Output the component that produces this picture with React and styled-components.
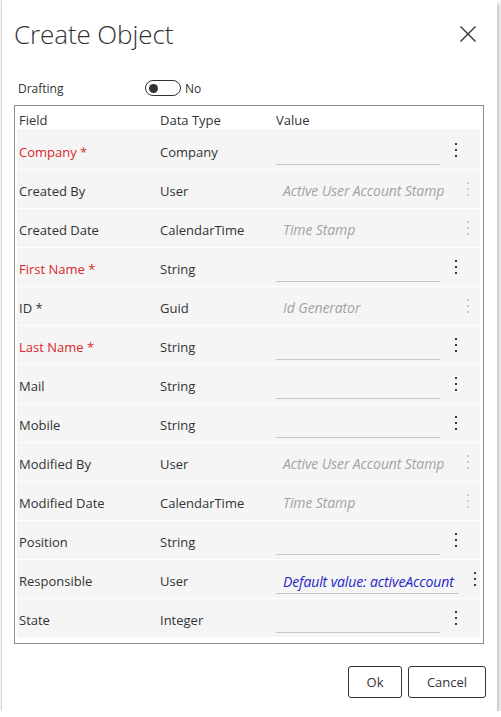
import React from 'react'
import styled, { createGlobalStyle } from 'styled-components'

const GlobalStyle = createGlobalStyle`
	html, body {
		margin: 0;
		padding: 0;
		background: #ffffff;
	}
	body {
		font-family: 'Open Sans', 'Liberation Sans', sans-serif;
		color: #333;
	}
`

const rows = [
	{ field: 'Company *', type: 'Company', required: true, kind: 'input' },
	{ field: 'Created By', type: 'User', kind: 'readonly', text: 'Active User Account Stamp' },
	{ field: 'Created Date', type: 'CalendarTime', kind: 'readonly', text: 'Time Stamp' },
	{ field: 'First Name *', type: 'String', required: true, kind: 'input' },
	{ field: 'ID *', type: 'Guid', kind: 'readonly', text: 'Id Generator' },
	{ field: 'Last Name *', type: 'String', required: true, kind: 'input' },
	{ field: 'Mail', type: 'String', kind: 'input' },
	{ field: 'Mobile', type: 'String', kind: 'input' },
	{ field: 'Modified By', type: 'User', kind: 'readonly', text: 'Active User Account Stamp' },
	{ field: 'Modified Date', type: 'CalendarTime', kind: 'readonly', text: 'Time Stamp' },
	{ field: 'Position', type: 'String', kind: 'input' },
	{ field: 'Responsible', type: 'User', kind: 'default', text: 'Default value: activeAccount' },
	{ field: 'State', type: 'Integer', kind: 'input' }
]

function MoreIcon({ faded }) {
	const c = faded ? '#c9c9c9' : '#3a3a3a'
	return (
		<svg width='4' height='16' viewBox='0 0 4 16'>
			<rect x='1' y='1' width='2' height='2' fill={c} />
			<rect x='1' y='7' width='2' height='2' fill={c} />
			<rect x='1' y='13' width='2' height='2' fill={c} />
		</svg>
	)
}

function CloseIcon() {
	return (
		<svg width='18' height='18' viewBox='0 0 18 18'>
			<path d='M1.5 1.5 L16.5 16.5 M16.5 1.5 L1.5 16.5' stroke='#333' strokeWidth='1.4' fill='none' />
		</svg>
	)
}

function App() {
	return (
		<>
			<GlobalStyle />
			<Dialog>
				<Header>
					<Title>Create Object</Title>
					<CloseButton aria-label='Close'>
						<CloseIcon />
					</CloseButton>
				</Header>

				<DraftRow>
					<DraftLabel>Drafting</DraftLabel>
					<Toggle>
						<Knob />
					</Toggle>
					<ToggleText>No</ToggleText>
				</DraftRow>

				<TableBox>
					<HeadRow>
						<HeadCell>Field</HeadCell>
						<HeadCell>Data Type</HeadCell>
						<HeadCell>Value</HeadCell>
					</HeadRow>
					{rows.map((r) => (
						<Row key={r.field}>
							<FieldCell required={r.required}>{r.field}</FieldCell>
							<TypeCell>{r.type}</TypeCell>
							<ValueCell>
								{r.kind === 'input' && (
									<>
										<ValueInput width={164} />
										<MenuButton>
											<MoreIcon />
										</MenuButton>
									</>
								)}
								{r.kind === 'readonly' && (
									<>
										<ReadOnlyText>{r.text}</ReadOnlyText>
										<MenuButton>
											<MoreIcon faded />
										</MenuButton>
									</>
								)}
								{r.kind === 'default' && (
									<>
										<ValueInput width={183}>
											<DefaultText>{r.text}</DefaultText>
										</ValueInput>
										<MenuButton>
											<MoreIcon />
										</MenuButton>
									</>
								)}
							</ValueCell>
						</Row>
					))}
				</TableBox>

				<Footer>
					<ActionButton width={54}>Ok</ActionButton>
					<ActionButton width={78}>Cancel</ActionButton>
				</Footer>
			</Dialog>
		</>
	)
}

export default App

const Dialog = styled.div`
	box-sizing: border-box;
	width: 496px;
	height: 711px;
	margin-left: 1px;
	background: #fff;
	border-left: 1px solid #d8d8d8;
	box-shadow: 2px 3px 5px rgba(0, 0, 0, 0.28);
	display: flex;
	flex-direction: column;
`

const Header = styled.div`
	display: flex;
	align-items: center;
	justify-content: space-between;
	padding: 14px 20px 0 12px;
	height: 40px;
`

const Title = styled.h1`
	margin: 0;
	font-size: 26px;
	font-weight: 300;
	color: #333;
	letter-spacing: -0.1px;
`

const CloseButton = styled.button`
	border: 0;
	background: none;
	padding: 0;
	display: flex;
	cursor: pointer;
`

const DraftRow = styled.div`
	display: flex;
	align-items: center;
	padding: 0 0 0 16px;
	margin-top: 25px;
	height: 18px;
`

const DraftLabel = styled.span`
	font-size: 12px;
	width: 127px;
	color: #333;
`

const Toggle = styled.div`
	box-sizing: border-box;
	width: 36px;
	height: 16px;
	border: 1px solid #333;
	border-radius: 8px;
	display: flex;
	align-items: center;
	padding-left: 3px;
`

const Knob = styled.div`
	width: 9px;
	height: 9px;
	border-radius: 50%;
	background: #333;
`

const ToggleText = styled.span`
	font-size: 12px;
	margin-left: 4px;
`

const TableBox = styled.div`
	box-sizing: border-box;
	margin: 8px 13px 0 12px;
	height: 539px;
	border: 1px solid #8c8c8c;
	padding: 0 3px 0 2px;
	display: flex;
	flex-direction: column;
`

const columns = `141px 116px 1fr`

const HeadRow = styled.div`
	display: grid;
	grid-template-columns: ${columns};
	height: 25px;
	padding-top: 1px;
	box-sizing: border-box;
	align-items: center;
	border-bottom: 1px solid #ececec;
`

const HeadCell = styled.div`
	font-size: 13px;
	padding: 2px 0 0 2px;
	color: #333;
`

const Row = styled.div`
	display: grid;
	grid-template-columns: ${columns};
	height: 38px;
	align-items: center;
	background: #f5f5f5;
	border-bottom: 1px solid #fff;
`

const FieldCell = styled.div`
	font-size: 13px;
	padding: 3px 0 0 2px;
	color: ${(p) => (p.required ? '#d9262c' : '#333')};
`

const TypeCell = styled.div`
	font-size: 13px;
	padding: 3px 0 0 2px;
	color: #333;
`

const ValueCell = styled.div`
	display: flex;
	align-items: center;
	padding-left: 2px;
	height: 100%;
`

const ValueInput = styled.div`
	box-sizing: border-box;
	width: ${(p) => p.width}px;
	height: 24px;
	margin-top: 6px;
	border-bottom: 1px solid #c8c8c8;
	display: flex;
	align-items: center;
	padding-left: 7px;
	white-space: nowrap;
`

const ReadOnlyText = styled.div`
	box-sizing: border-box;
	width: 176px;
	padding: 3px 0 0 7px;
	font-size: 14px;
	font-style: italic;
	color: #a3a3a3;
	white-space: nowrap;
	letter-spacing: -0.1px;
`

const DefaultText = styled.span`
	font-size: 14px;
	font-style: italic;
	color: #2424c8;
	letter-spacing: -0.1px;
`

const MenuButton = styled.div`
	width: 32px;
	display: flex;
	justify-content: center;
	align-items: center;
`

const Footer = styled.div`
	display: flex;
	justify-content: flex-end;
	gap: 6px;
	padding: 22px 11px 0 0;
`

const ActionButton = styled.button`
	box-sizing: border-box;
	width: ${(p) => p.width}px;
	height: 32px;
	border: 1px solid #333;
	border-radius: 3px;
	background: #fff;
	font-family: 'Open Sans', 'Liberation Sans', sans-serif;
	font-size: 13px;
	color: #333;
	cursor: pointer;
`
